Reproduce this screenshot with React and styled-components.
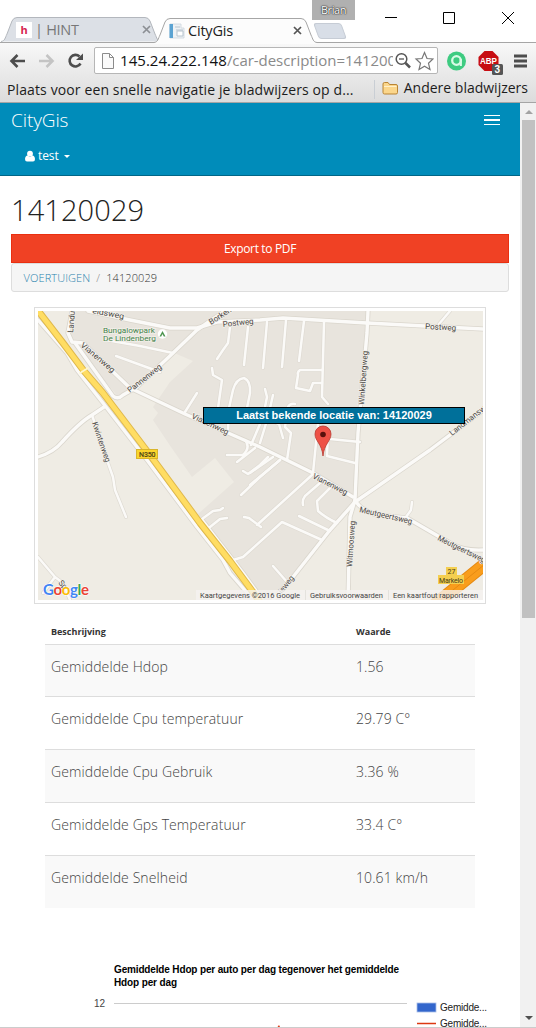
import React from "react";
import styled, { createGlobalStyle } from "styled-components";

const GlobalStyle = createGlobalStyle`
  * { box-sizing: border-box; }
  html, body { margin: 0; background: #fff; overflow: hidden; }
  body { font-family: "Open Sans", "Noto Sans", sans-serif; }
`;

const Window = styled.div`
  width: 536px;
  height: 1028px;
  overflow: hidden;
  display: flex;
  flex-direction: column;
  background: #fff;
  border-bottom: 1px solid #ccc;
`;

/* Browser frame */
const TitleBar = styled.div`
  position: relative;
  height: 43px;
  flex: none;
  display: flex;
  align-items: flex-end;
  border-bottom: 1px solid #a6a6a6;
  padding-left: 1px;
`;
const TabBox = styled.div`
  position: relative;
  z-index: ${(p) => (p.$active ? 2 : 1)};
  width: ${(p) => p.$width}px;
  height: 25px;
  margin-right: -7px;
  margin-bottom: ${(p) => (p.$active ? -1 : 0)}px;
  padding: 0 ${(p) => (p.$active ? 15 : 10)}px 0 15px;
  display: flex;
  align-items: center;
  gap: 3px;
`;
const TabShape = styled.svg`
  position: absolute;
  left: 0;
  top: 0;
  z-index: -1;
`;
const TabTitle = styled.span`
  flex: 1;
  font-size: 14.5px;
  line-height: 20px;
  letter-spacing: ${(p) => p.$spacing || 0}px;
  color: ${(p) => p.$color};
  white-space: nowrap;
`;
const HintIcon = styled.span`
  width: 16px;
  height: 16px;
  background: #fff;
  color: #d62450;
  font: bold 11px/16px "Open Sans", sans-serif;
  text-align: center;
`;
const NewTab = styled.div`
  width: 28px;
  height: 16px;
  margin: 0 0 3px 6px;
  background: #d8dee7;
  border: 1px solid #c6ccd5;
  border-radius: 3px;
  transform: skewX(20deg);
`;
const Profile = styled.div`
  position: absolute;
  left: 312px;
  top: 0;
  width: 43px;
  height: 20px;
  background: #b0b0b0;
  color: #fff;
  font-size: 11px;
  line-height: 20px;
  letter-spacing: -0.4px;
  text-align: center;
  text-shadow: 0 0 1px #222, 0 0 1px #333, 0 0 2px #444;
`;
const Controls = styled.svg`
  position: absolute;
  right: 0;
  top: 0;
`;
const ChromeBars = styled.div`
  height: 60px;
  flex: none;
  background: linear-gradient(#f8f8f8, #dcdcdc);
  border-bottom: 1px solid #a5a5a5;
`;
const Toolbar = styled.div`
  height: 35px;
  display: flex;
  align-items: center;
  padding: 0 9px;
`;
const NavButtons = styled.svg`
  flex: none;
  margin-right: 8px;
`;
const Omnibox = styled.div`
  width: 344px;
  height: 27px;
  border: 1px solid #b6b6b6;
  border-radius: 2px;
  background: #fff;
  display: flex;
  align-items: center;
  padding: 0 3px 0 7px;
`;
const Url = styled.div`
  width: 273px;
  margin: -2px 1px 0 6px;
  overflow: hidden;
  white-space: nowrap;
  font-size: 15px;
  line-height: 24px;
  letter-spacing: -0.05px;
  color: #8a8a8a;
  b { font-weight: 400; color: #111; letter-spacing: 0.05px; }
`;
const Extensions = styled.svg`
  flex: none;
  margin-left: 7px;
`;
const BookmarkBar = styled.div`
  height: 24px;
  display: flex;
  align-items: center;
  padding: 0 8px 1px 7px;
`;
const BookmarkText = styled.span`
  font-size: 14px;
  line-height: 22px;
  margin-top: ${(p) => p.$shift || 0}px;
  letter-spacing: ${(p) => p.$spacing || 0}px;
  white-space: nowrap;
  color: #1c1c1c;
`;
const Folder = styled.div`
  margin-left: auto;
  border-left: 1px solid #c9ced4;
  padding-left: 7px;
  display: flex;
  align-items: center;
  gap: 6px;
  svg { margin-top: -3px; }
`;

/* Web page */
const Viewport = styled.div`
  flex: 1;
  min-height: 0;
  display: flex;
`;
const Page = styled.main`
  width: 520px;
  overflow: hidden;
`;
const ScrollTrack = styled.div`
  width: 16px;
  background: #f1f1f1;
  display: flex;
  flex-direction: column;
  align-items: center;
  padding: 7px 0;
`;
const ScrollThumb = styled.div`
  width: 13px;
  height: 498px;
  margin: 6px 0 auto 1px;
  background: #c1c1c1;
`;
const Arrow = styled.span`
  border: 4px solid transparent;
  margin-left: 1px;
  ${(p) => (p.$up ? "border-top: 0; border-bottom-color: #a3a3a3;" : "border-bottom: 0; border-top-color: #505050;")}
`;
const Navbar = styled.nav`
  height: 73px;
  background: #008cba;
  border-bottom: 1px solid #006687;
  color: #fff;
  padding: 3px 20px 0 11px;
`;
const NavRow = styled.div`
  display: flex;
  align-items: center;
  justify-content: space-between;
  height: 27px;
`;
const Brand = styled.span`
  font-size: 19px;
  font-weight: 300;
  letter-spacing: -0.1px;
`;
const UserMenu = styled.div`
  display: flex;
  align-items: center;
  margin: 11px 0 0 14px;
  height: 22px;
  font-size: 12px;
  span { margin: 0 5px 0 3px; letter-spacing: -0.1px; }
  svg { margin-top: 1px; }
`;
const Caret = styled.i`
  border: 3px solid transparent;
  border-top-color: #fff;
  border-bottom: 0;
  margin-top: 3px;
`;
const Burger = styled.div`
  width: 16px;
  height: 10px;
  border-top: 1px solid #fff;
  border-bottom: 1px solid #fff;
  display: flex;
  align-items: center;
  &::before { content: ""; width: 100%; height: 2px; background: #fff; }
`;
const Content = styled.section`
  padding: 0 11px;
`;
const Title = styled.h1`
  margin: 0;
  height: 58px;
  padding-top: 14px;
  font-size: 29px;
  line-height: 40px;
  letter-spacing: 0.1px;
  font-weight: 300;
  color: #222;
`;
const ExportButton = styled.button`
  display: block;
  width: 498px;
  height: 29px;
  padding: 0;
  background: #f04124;
  border: 1px solid #ea2f10;
  color: #fff;
  font: 12px/27px "Open Sans", sans-serif;
  letter-spacing: -0.35px;
`;
const Breadcrumb = styled.div`
  width: 498px;
  height: 29px;
  border: 1px solid #ddd;
  border-radius: 3px;
  background: #f5f5f5;
  padding-left: 11.5px;
  font-size: 11px;
  line-height: 28px;
  letter-spacing: 0.1px;
  font-weight: 300;
  color: #333;
  white-space: pre;
  a { color: #2b83ad; }
  i { font-style: normal; color: #888; margin: 0 6px; }
`;
const MapFrame = styled.div`
  width: 452px;
  height: 297px;
  margin: 15px 0 0 23px;
  border: 1px solid #ddd;
  padding: 3px;
  position: relative;
  svg { display: block; }
`;
const MapLabel = styled.div`
  position: absolute;
  left: 168px;
  top: 99px;
  width: 262px;
  height: 17px;
  border: 1px solid #000;
  background: #00709a;
  color: #fff;
  text-align: center;
  font: bold 11px/15px "Liberation Sans", Arial, sans-serif;
`;
const Table = styled.div`
  width: 430px;
  margin: 15px 0 0 34px;
`;
const Row = styled.div`
  display: grid;
  grid-template-columns: 305px 1fr;
  height: ${(p) => p.$height}px;
  padding: 9px 0 0 6px;
  border-top: 1px solid #ddd;
  background: ${(p) => (p.$odd ? "#f9f9f9" : "#fff")};
  font-size: 14px;
  line-height: 26px;
  letter-spacing: 0.1px;
  font-weight: 300;
  color: #444;
`;
const HeadRow = styled(Row)`
  border-top: 0;
  padding-top: 0;
  font-size: 9px;
  font-weight: 700;
  letter-spacing: 0;
  color: #333;
`;
const Chart = styled.svg`
  display: block;
  margin-left: 79px;
  margin-top: 52px;
`;

const TabBackground = ({ width, active }) => (
  <TabShape width={width} height="26">
    <path
      d={`M0 24.5 C4 24 4 21 6 17 L11 4 Q12.500 .5 16 .5 H${width - 16} Q${width - 12.5} .5 ${width - 11} 4 L${width - 6} 17 C${width - 4} 21 ${width - 4} 24 ${width} 24.500${active ? " V26 H0 Z" : ""}`}
      fill={active ? "#fcfcfc" : "#dce0e6"}
      stroke={active ? "none" : "#b3b7bd"}
    />
    {active && (
      <path
        d={`M0 24.500 C4 24 4 21 6 17 L11 4 Q12.500 .5 16 .5 H${width - 16} Q${width - 12.5} .5 ${width - 11} 4 L${width - 6} 17 C${width - 4} 21 ${width - 4} 24 ${width} 24.500`}
        fill="none"
        stroke="#a6a6a6"
      />
    )}
  </TabShape>
);

const CloseX = ({ color }) => (
  <svg width="9" height="9" viewBox="0 0 9 9">
    <path d="M1 1 L8 8 M8 1 L1 8" stroke={color} strokeWidth="1.700" />
  </svg>
);

const streets = [
  "M72 311 L68 333 L72 342 L83 343 L130 388 L185 414 L260 447 L313 473 L353 497",
  "M75 343 L113 396 Q118 400 123 395 L137 387 L173 353 L197 330 L210 321 L228 309",
  "M88 311 L130 320 L170 328 L197 328 L217 322 L260 320 L283 318 L367 323 L483 329",
  "M368 311 L367 333 L358 433 L355 500 L350 517 L348 600",
  "M355 502 L430 450 L483 410",
  "M355 502 L330 530 L293 577 L273 600",
  "M355 500 Q360 510 377 515 L407 518 L450 543 Q463 551 483 550",
  "M38 320 L67 353 L77 370 L103 403 L147 460 L197 527 L223 560 L230 573 L249 595",
  "M202 520 L243 573 L262 599",
  "M38 457 Q54 452 62 442 Q80 422 92 415 L104 407",
];

const lanes = [
  "M92 415 L108 463 L113 477 L115 490 L126 517",
  "M38 557 L55 577 L63 583 L70 600 M55 577 L43 593",
  "M106 340 L140 346 L173 353 M116 356 L160 372",
  "M197 393 L185 412 M230 327 L228 343 L223 350 L217 359 M248 327 L244 365",
  "M212 368 L213 375 L222 380 L217 415 M228 430 L229 408 L233 390 Q236 379 244 378 Q251 381 250 393 L247 408",
  "M227 455 H243 Q251 447 245 440 M237 462 L255 448 M243 471 L248 474 L260 465 L268 457 M241 495 L260 477 L280 460",
  "M267 322 L263 368 M286 320 L282 367 M304 321 L299 361 M324 322 L322 397 L328 404",
  "M322 370 H300 Q297 372 298 375 L296 388 L310 391 L313 383 H322",
  "M265 389 L267 397 L263 417 L251 445 M273 395 L268 417 L260 443 M288 407 L285 427 L291 433 L287 460",
  "M288 407 Q290 403 295 404 M360 442 L330 439 M318 423 L313 473 M328 430 L327 456 L355 463",
  "M273 457 L250 473 M280 460 L250 485 M312 475 L257 525 M244 517 L249 518 L261 527",
  "M320 483 L305 496 Q302 500 303 505 M330 488 L317 501 L318 511 Q326 518 337 523",
  "M299 516 L330 531 M233 560 L243 557 L282 522 L322 540 M273 566 L287 582",
  "M210 527 L220 519 L227 518 M202 519 L213 511 L220 510 L223 508 M412 502 L411 510 L406 517",
  "M439 324 L450 311 M263 417 L279 424 L283 438",
];

const labels = [
  ["Vianenweg", 80, 346, 42, 40],
  ["Pannenweg", 130, 393, 41, -38],
  ["Vianenweg", 191, 418, 40, 25],
  ["Vianenweg", 312, 478, 38, 27],
  ["Postweg", 223, 327, 31, -6],
  ["Postweg", 425, 329, 31, 3],
  ["eidsweg", 92, 313, 32, 11],
  ["Landu", 73, 333, 22, -85],
  ["Borken", 211, 325, 25, -33],
  ["Kwintenweg", 92, 423, 42, 71],
  ["Winkelbergweg", 364, 405, 54, -86],
  ["Witmoosweg", 352, 567, 46, -86],
  ["Meutgeertsweg", 359, 512, 54, 13],
  ["Meutgeertsweg", 437, 540, 52, 26],
  ["Landmansweg", 452, 436, 52, -38],
  ["ieweg", 282, 594, 20, -52],
  ["Sp", 58, 583, 9, 50],
];

const MapDrawing = () => (
  <svg width="445" height="289" viewBox="38 311 445 289" fontFamily="Roboto, sans-serif">
    <rect x="38" y="311" width="445" height="289" fill="#efece4" />
    <path
      d="M38 311 H368 L358 433 L355 502 L275 600 H255 L198 514 L234 482 L215 458 L192 477 L171 447 L153 420 L158 413 L153 407 L170 382 L193 361 L172 352 L120 399 L72 342 L68 333 L72 311 Z"
      fill="#e8e4dd"
    />
    <path d="M38 311 H72 L68 333 L74 345 L118 400 L103 393 Z" fill="#efece4" />
    <g fill="none" strokeLinecap="round" strokeLinejoin="round">
      {lanes.map((d) => <path key={d} d={d} stroke="#dedad2" strokeWidth="3.800" />)}
      {streets.map((d) => <path key={d} d={d} stroke="#dad6cd" strokeWidth="5" />)}
      {lanes.map((d) => <path key={d} d={d} stroke="#fbfaf8" strokeWidth="2.500" />)}
      {streets.map((d) => <path key={d} d={d} stroke="#fbfaf8" strokeWidth="3.400" />)}
      <path d="M36 308 L63 343 L84 371 L103 393 L147 451 L200 523 L230 561 L250 588 L260 602" stroke="#dfb84b" strokeWidth="7" />
      <path d="M36 308 L63 343 L84 371 L103 393 L147 451 L200 523 L230 561 L250 588 L260 602" stroke="#ffdd63" strokeWidth="5" />
      <path d="M432 607 L490 560" stroke="#e58a12" strokeWidth="13" />
      <path d="M432 607 L490 560" stroke="#f99d1c" strokeWidth="11" />
      <path d="M432 607 L490 560" stroke="#e58a12" strokeWidth="1" />
      <path d="M80 373 L88 368" stroke="#fff6cf" strokeWidth="1.500" />
    </g>
    <g fontSize="8" fill="#4b4845" stroke="#f3f0ea" strokeWidth="1.400" paintOrder="stroke">
      {labels.map(([text, x, y, length, angle]) => (
        <text key={`${text}${x}`} x={x} y={y} textLength={length} lengthAdjust="spacingAndGlyphs" transform={`rotate(${angle} ${x} ${y})`}>{text}</text>
      ))}
      <g fill="#45824a">
        <text x="103" y="333" textLength="52" lengthAdjust="spacingAndGlyphs">Bungalowpark</text>
        <text x="103" y="341" textLength="53" lengthAdjust="spacingAndGlyphs">De Lindenberg</text>
      </g>
    </g>
    <circle cx="162.500" cy="334" r="4.700" fill="#fff" />
    <path d="M159.500 336.500 L162.500 331 L165.500 336.500 H163.800 L162.500 334 L161.200 336.500 Z" fill="#4d944f" />
    <g fontSize="7" fill="#4a3d16">
      <rect x="136.500" y="449.500" width="21" height="9" fill="#fbd52c" stroke="#d9b52c" />
      <text x="139" y="456.500" textLength="16.500" stroke="#4a3d16" strokeWidth=".2">N350</text>
      <rect x="446" y="567" width="11" height="9" fill="#f4cf50" />
      <rect x="438" y="575" width="26" height="9" fill="#f4cf50" />
      <text x="447.500" y="574" textLength="8">27</text>
      <text x="439" y="582.500" textLength="24">Markelo</text>
    </g>
    <rect x="196" y="590" width="287" height="10" fill="#f5f3f0" fillOpacity=".8" />
    <path d="M305.500 590 V600 M388.500 590 V600" stroke="#e4e2dd" />
    <g fontSize="8" fill="#444">
      <text x="200" y="598" textLength="100" lengthAdjust="spacingAndGlyphs">Kaartgegevens ©2016 Google</text>
      <text x="310" y="598" textLength="73" lengthAdjust="spacingAndGlyphs">Gebruiksvoorwaarden</text>
      <text x="393" y="598" textLength="85" lengthAdjust="spacingAndGlyphs">Een kaartfout rapporteren</text>
    </g>
    <text x="43" y="595" fontSize="15" fontFamily="Lato, sans-serif" fontWeight="700" textLength="46" stroke="#fff" strokeWidth="1" paintOrder="stroke">
      <tspan fill="#4285f4">G</tspan><tspan fill="#ea4335">o</tspan><tspan fill="#fbbc05">o</tspan><tspan fill="#4285f4">g</tspan><tspan fill="#34a853">l</tspan><tspan fill="#ea4335">e</tspan>
    </text>
    <path d="M323 456 C322 444 315 441 315 434 A8 8 0 0 1 331 434 C331 441 324 444 323 456 Z" fill="#ee5146" stroke="#b93a31" strokeWidth=".8" />
    <circle cx="323" cy="434.500" r="2.800" fill="#59100c" />
  </svg>
);

const rows = [
  ["Gemiddelde Hdop", "1.56", 52],
  ["Gemiddelde Cpu temperatuur", "29.79 C°", 53],
  ["Gemiddelde Cpu Gebruik", "3.36 %", 53],
  ["Gemiddelde Gps Temperatuur", "33.4 C°", 53],
  ["Gemiddelde Snelheid", "10.61 km/h", 53],
];

export default function App() {
  return (
    <Window>
      <GlobalStyle />
      <TitleBar>
        <TabBox $width={160}>
          <TabBackground width={160} />
          <HintIcon>h</HintIcon>
          <TabTitle $color="#777" $spacing={-0.3}>| HINT</TabTitle>
          <CloseX color="#8c8f94" />
        </TabBox>
        <TabBox $active $width={163}>
          <TabBackground width={163} active />
          <svg width="16" height="16" viewBox="0 0 16 16">
            <path d="M1 1 H12 V5 H15 V15 H1 Z" fill="#eef2f5" stroke="#cdd6dd" strokeWidth=".8" />
            <path d="M.5 1 H4 V15 H.5 Z" fill="#5ba3d2" />
            <path d="M6 4 H11 M8 8 V13 H14 V8 Z M7 7 H14" stroke="#b7c4ce" fill="#fff" />
          </svg>
          <TabTitle $color="#222" $spacing={-0.2}>CityGis</TabTitle>
          <CloseX color="#555" />
        </TabBox>
        <NewTab />
        <Profile>Brian</Profile>
        <Controls width="160" height="34" fill="none" stroke="#000">
          <path d="M9 17.500 H21 M67.500 12.500 H78.500 V23.500 H67.500 Z M126 12 L138 24 M138 12 L126 24" />
        </Controls>
      </TitleBar>
      <ChromeBars>
        <Toolbar>
          <NavButtons width="77" height="20" fill="none">
            <path d="M16 10 H3 M8.500 4 L2.500 10 L8.500 16" stroke="#4d4d4d" strokeWidth="2.600" />
            <path d="M30 10 H43 M37.500 4 L43.500 10 L37.500 16" stroke="#c4c4c4" strokeWidth="2.600" />
            <path d="M70.500 5.500 A5.800 5.800 0 1 0 71.500 12.500" stroke="#4d4d4d" strokeWidth="2.600" />
            <path d="M74 2.500 V9 H67 Z" fill="#4d4d4d" />
          </NavButtons>
          <Omnibox>
            <svg width="12" height="16" fill="#fafafa" stroke="#8b8b8b">
              <path d="M.5 .5 H7.500 L11.500 4.500 V15.500 H.5 Z M7.500 .5 V4.500 H11.500" />
            </svg>
            <Url><b>145.24.222.148</b>/car-description=14120029</Url>
            <svg width="40" height="22" fill="none">
              <circle cx="7.500" cy="9" r="5.300" stroke="#555" strokeWidth="1.500" />
              <path d="M5 9 H10" stroke="#555" strokeWidth="1.300" />
              <path d="M11.500 13 L16 17.500" stroke="#555" strokeWidth="2.500" />
              <path d="M30.500 2.500 L33 8.500 L39 9 L34.500 13.300 L36 19.500 L30.500 16.200 L25 19.500 L26.500 13.300 L22 9 L28 8.500 Z" stroke="#777" strokeWidth="1.200" />
            </svg>
          </Omnibox>
          <Extensions width="84" height="30">
            <circle cx="11.500" cy="15" r="9.500" fill="#3ecb81" />
            <circle cx="11.500" cy="14.500" r="4.300" fill="none" stroke="#d9fbe6" strokeWidth="2.300" />
            <path d="M15.800 13 V20" fill="none" stroke="#d9fbe6" strokeWidth="2.200" />
            <circle cx="11.500" cy="15" r="1.600" fill="#3ecb81" />
            <path d="M39.500 5 H47.500 L53.500 11 V19 L47.500 25 H39.500 L33.500 19 V11 Z" fill="#c70d12" />
            <text x="35" y="18" textLength="17" lengthAdjust="spacingAndGlyphs" fontSize="9" fontWeight="700" fontFamily="Liberation Sans, sans-serif" fill="#fff">ABP</text>
            <rect x="47" y="18" width="11" height="11" rx="1.500" fill="#555" />
            <text x="49.500" y="27" fontSize="10" fontWeight="700" fontFamily="Liberation Sans, sans-serif" fill="#fff">3</text>
            <path d="M69 10 H82 M69 15 H82 M69 20 H82" stroke="#4d4d4d" strokeWidth="3" />
          </Extensions>
        </Toolbar>
        <BookmarkBar>
          <BookmarkText $spacing={0.12}>Plaats voor een snelle navigatie je bladwijzers op d...</BookmarkText>
          <Folder>
            <svg width="16" height="14">
              <path d="M1 3 Q1 1.500 2.500 1.500 H6 L7.500 3.500 H14 Q15.500 3.500 15.500 5 V11.500 Q15.500 13 14 13 H2.500 Q1 13 1 11.500 Z" fill="#fbd68b" stroke="#b98434" />
              <path d="M2 5.500 H14.500" stroke="#fff0cb" />
            </svg>
            <BookmarkText $spacing={0} $shift={-3}>Andere bladwijzers</BookmarkText>
          </Folder>
        </BookmarkBar>
      </ChromeBars>
      <Viewport>
        <Page>
          <Navbar>
            <NavRow>
              <Brand>CityGis</Brand>
              <Burger />
            </NavRow>
            <UserMenu>
              <svg width="10" height="12" fill="#fff">
                <circle cx="5" cy="3.700" r="2.900" />
                <path d="M0 9 Q.3 5.500 2.600 5.500 Q5 7.800 7.400 5.500 Q9.700 5.500 10 9 Q10 11.500 8 11.500 H2 Q0 11.500 0 9 Z" />
              </svg>
              <span>test</span>
              <Caret />
            </UserMenu>
          </Navbar>
          <Content>
            <Title>14120029</Title>
            <ExportButton>Export to PDF</ExportButton>
            <Breadcrumb><a>VOERTUIGEN</a><i>/</i>14120029</Breadcrumb>
            <MapFrame>
              <MapDrawing />
              <MapLabel>Laatst bekende locatie van: 14120029</MapLabel>
            </MapFrame>
            <Table>
              <HeadRow $height={25}><span>Beschrijving</span><span>Waarde</span></HeadRow>
              {rows.map(([name, value, height], i) => (
                <Row key={name} $odd={i % 2 === 0} $height={height}>
                  <span>{name}</span>
                  <span>{value}</span>
                </Row>
              ))}
            </Table>
            <Chart width="410" height="67" viewBox="90 960 410 67" fontFamily="Liberation Sans, Arial, sans-serif" fontSize="10" fill="#222">
              <text x="114" y="973" fontWeight="700" fill="#000" textLength="285">Gemiddelde Hdop per auto per dag tegenover het gemiddelde</text>
              <text x="114" y="986" fontWeight="700" fill="#000" textLength="63">Hdop per dag</text>
              <text x="105" y="1007" textAnchor="end" fill="#444">12</text>
              <path d="M114 1003.500 H407" stroke="#ccc" />
              <rect x="417" y="1003" width="19" height="9" fill="#3366cc" stroke="#a9bde8" strokeWidth=".8" />
              <text x="440" y="1011" textLength="47">Gemidde...</text>
              <path d="M417 1023.500 H436" stroke="#dc3912" strokeWidth="1.500" />
              <text x="440" y="1027" textLength="47">Gemidde...</text>
              <path d="M277.500 1027 L279 1025 L280 1027 Z" fill="#dc3912" />
            </Chart>
          </Content>
        </Page>
        <ScrollTrack>
          <Arrow $up />
          <ScrollThumb />
          <Arrow />
        </ScrollTrack>
      </Viewport>
    </Window>
  );
}
